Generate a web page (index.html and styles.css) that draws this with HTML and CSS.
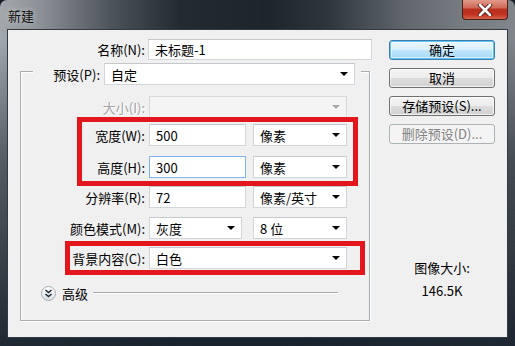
FILE: index.html
```html
<!DOCTYPE html>
<html lang="zh-CN">
<head>
    <meta charset="UTF-8">
    <title>新建</title>
    <link rel="stylesheet" href="styles.css">
</head>
<body>
<div class="window">
    <div class="titlebar">
        <span class="title">新建</span>
        <div class="close">
            <svg width="16" height="12" viewBox="0 0 16 12">
                <path d="M3 1 L13 11 M13 1 L3 11" stroke="#5a1a14" stroke-width="4.5" stroke-linecap="round"/>
                <path d="M3 1 L13 11 M13 1 L3 11" stroke="#fff" stroke-width="2.6" stroke-linecap="round"/>
            </svg>
        </div>
    </div>

    <div class="client">
        <div class="form">
            <div class="row row-name">
                <label class="lbl lbl-name">名称(N):</label>
                <div class="field f-name">未标题-1</div>
            </div>

            <div class="group">
                <div class="group-head">
                    <label class="lbl lbl-preset">预设(P):</label>
                    <div class="field select f-preset">自定<i class="arrow"></i></div>
                </div>

                <div class="row r-size">
                    <label class="lbl disabled">大小(I):</label>
                    <div class="field select f-size off"><i class="arrow"></i></div>
                </div>
                <div class="row r-width">
                    <label class="lbl">宽度(W):</label>
                    <div class="field f-num">500</div>
                    <div class="field select f-unit">像素<i class="arrow"></i></div>
                </div>
                <div class="row r-height">
                    <label class="lbl">高度(H):</label>
                    <div class="field f-num focus">300</div>
                    <div class="field select f-unit">像素<i class="arrow"></i></div>
                </div>
                <div class="row r-res">
                    <label class="lbl">分辨率(R):</label>
                    <div class="field f-num">72</div>
                    <div class="field select f-unit">像素/英寸<i class="arrow"></i></div>
                </div>
                <div class="row r-mode">
                    <label class="lbl">颜色模式(M):</label>
                    <div class="field select f-mode">灰度<i class="arrow"></i></div>
                    <div class="field select f-unit">8 位<i class="arrow"></i></div>
                </div>
                <div class="row r-bg">
                    <label class="lbl">背景内容(C):</label>
                    <div class="field select f-bg">白色<i class="arrow"></i></div>
                </div>

                <div class="advanced">
                    <span class="adv-icon">
                        <svg width="15" height="15" viewBox="0 0 15 15">
                            <path d="M4.5 4 L7.5 6.5 L10.5 4 M4.5 8 L7.5 10.5 L10.5 8" fill="none" stroke="#1f2a33" stroke-width="1.6"/>
                        </svg>
                    </span>
                    <span class="adv-text">高级</span>
                    <span class="adv-line"></span>
                </div>
            </div>
        </div>

        <div class="side">
            <div class="btn default">确定</div>
            <div class="btn">取消</div>
            <div class="btn">存储预设(S)...</div>
            <div class="btn off">删除预设(D)...</div>

            <div class="info">
                <div class="info-label">图像大小:</div>
                <div class="info-value">146.5K</div>
            </div>
        </div>
    </div>

    <div class="mark mark-size"></div>
    <div class="mark mark-bg"></div>
</div>
</body>
</html>
```

FILE: styles.css
```css
body {
    margin: 0;
    width: 515px;
    height: 346px;
    overflow: hidden;
    background: #1b2128;
    font-family: "Noto Sans CJK SC", "Noto Sans", sans-serif;
    font-size: 13px;
    color: #000;
}

.window {
    position: relative;
    width: 515px;
    height: 346px;
    display: flex;
    flex-direction: column;
    border-radius: 7px 7px 0 0;
    overflow: hidden;
    background:
        linear-gradient(180deg, rgba(0,0,0,0) 0, rgba(0,0,0,0) 40px, rgba(22,30,38,.55) 160px, rgba(24,34,44,.95) 100%),
        linear-gradient(90deg, #a3a8ac 0, #8a9095 8%, #4b5258 22%, #222b32 35%, #1c252c 52%, #2f373d 64%, #5f656a 78%, #777c81 90%, #80858a 100%);
}

/* barra de titulo */
.titlebar {
    height: 29px;
    display: flex;
    align-items: flex-start;
    flex-shrink: 0;
}

.title {
    margin: 6px 0 0 8px;
    font-size: 13px;
    color: #111;
    text-shadow: 0 0 6px rgba(255,255,255,.6);
}

.close {
    margin-left: auto;
    margin-right: 7px;
    width: 46px;
    height: 20px;
    box-sizing: border-box;
    border: 1px solid #4a1e19;
    border-top: none;
    border-radius: 0 0 4px 4px;
    background: linear-gradient(180deg, #e29a8b 0, #d06a58 40%, #b9301f 50%, #c0301f 75%, #d5644c 100%);
    display: flex;
    align-items: center;
    justify-content: center;
}

/* area del dialogo */
.client {
    flex: 1;
    margin: 0 7px 8px 7px;
    border: 1px solid #323a42;
    background: #f0f0f0;
    display: flex;
}

.form {
    width: 364px;
    flex-shrink: 0;
}

.row {
    display: flex;
    align-items: center;
    height: 22px;
}

.lbl {
    width: 124px;
    text-align: right;
    margin-right: 4px;
    white-space: nowrap;
    color: #000;
}

.lbl.disabled {
    color: #a3a3a3;
    text-shadow: 1px 1px 0 #fff;
}

.row-name {
    margin-top: 9px;
    height: 21px;
}
.lbl-name {
    width: 137px;
    margin-right: 3px;
}

.field {
    height: 100%;
    box-sizing: border-box;
    border: 1px solid #d2d5d9;
    border-top-color: #c4c7cb;
    background: #fff;
    padding-left: 6px;
    display: flex;
    align-items: center;
    white-space: nowrap;
}

.select .arrow {
    margin-left: auto;
    margin-right: 6px;
    width: 0;
    height: 0;
    border-left: 4px solid transparent;
    border-right: 4px solid transparent;
    border-top: 4px solid #000;
}

.field.off {
    background: #f4f4f4;
    border-color: #dadada;
}
.field.off .arrow {
    border-top-color: #a8a8a8;
}

.field.focus {
    border-color: #7eb4ea;
}

.f-name { width: 224px; }
.f-preset { width: 251px; }
.f-size { width: 198px; }
.f-num { width: 97px; margin-right: 7px; }
.f-unit { width: 94px; }
.f-mode { width: 93px; margin-right: 11px; }
.f-bg { width: 198px; }

/* grupo */
.group {
    margin: 11px 0 0 12px;
    width: 350px;
    box-sizing: border-box;
    border: 1px solid #a9acaf;
    box-shadow: inset 1px 1px 0 #fff, 1px 1px 0 #fff;
    padding-bottom: 19px;
}

.group-head {
    display: flex;
    align-items: center;
    height: 22px;
    margin: -9px 0 0 12px;
    width: 328px;
    background: #f0f0f0;
}
.lbl-preset {
    width: 67px;
}

.r-size { margin-top: 11px; }
.r-width { margin-top: 6px; }
.r-height { margin-top: 10px; }
.r-res { margin-top: 8px; }
.r-mode { margin-top: 9px; }
.r-bg { margin-top: 8px; }

.advanced {
    display: flex;
    align-items: center;
    height: 16px;
    margin-top: 16px;
    padding-left: 20px;
}

.adv-icon {
    width: 15px;
    height: 15px;
    box-sizing: border-box;
    border-radius: 50%;
    border: 1px solid #a5adb4;
    background: linear-gradient(180deg, #ffffff 0, #eef0f2 50%, #d9dde1 100%);
    display: flex;
    align-items: center;
    justify-content: center;
}
.adv-icon svg {
    margin: -1px;
}

.adv-text {
    margin-left: 6px;
}

.adv-line {
    margin-left: 5px;
    width: 245px;
    height: 1px;
    background: #a9acaf;
    border-bottom: 1px solid #fff;
}

/* columna de botones */
.side {
    margin-left: 17px;
    width: 106px;
    padding-top: 10px;
}

.btn {
    height: 20px;
    box-sizing: border-box;
    margin-bottom: 8px;
    border: 1px solid #707070;
    border-radius: 3px;
    background: linear-gradient(180deg, #f4f4f4 0, #ececec 48%, #dcdcdc 52%, #d2d2d2 100%);
    box-shadow: inset 0 0 0 1px rgba(255,255,255,.7);
    text-align: center;
    line-height: 18px;
    white-space: nowrap;
}

.btn.default {
    border-color: #3c7fb1;
    box-shadow: inset 0 0 0 1px #5fc4f2, inset 0 0 0 2px rgba(255,255,255,.5);
    background: linear-gradient(180deg, #eaf6fd 0, #d9f0fc 48%, #bee6fd 52%, #a7d9f5 100%);
}

.btn.off {
    border-color: #adb2b5;
    background: #f4f4f4;
    color: #838383;
    box-shadow: none;
}

.info {
    margin-top: 115px;
    text-align: center;
}
.info-label {
    line-height: 18px;
}
.info-value {
    line-height: 18px;
    margin-top: 5px;
}

/* marcas rojas encima del dialogo */
.mark {
    position: absolute;
    box-sizing: border-box;
    border: 5px solid #e3151d;
}
.mark-size {
    left: 77px;
    top: 117px;
    width: 281px;
    height: 69px;
}
.mark-bg {
    left: 65px;
    top: 241px;
    width: 300px;
    height: 34px;
}
```
